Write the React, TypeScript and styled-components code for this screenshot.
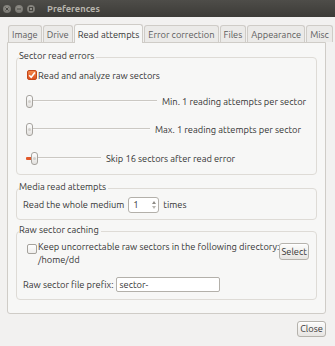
import styled, { createGlobalStyle } from 'styled-components';

const GlobalStyle = createGlobalStyle`
  html, body {
    margin: 0;
    padding: 0;
    background: #f2f1f0;
  }
  body {
    font-family: Ubuntu, "Liberation Sans", Arial, sans-serif;
    font-size: 9.3px;
    color: #353535;
  }
  * {
    box-sizing: border-box;
  }
`;

const Window = styled.div`
  width: 335px;
  height: 346px;
  background: #f2f1f0;
  display: flex;
  flex-direction: column;
  overflow: hidden;
`;

const TitleBar = styled.div`
  height: 17px;
  flex: none;
  display: flex;
  align-items: center;
  padding-left: 3px;
  background: linear-gradient(#4e4d49, #3c3b37);
`;

const WinButtons = styled.div`
  display: flex;
  gap: 4px;
`;

const WinButton = styled.span`
  width: 8px;
  height: 8px;
  border-radius: 50%;
  background: radial-gradient(circle at 50% 40%, #94928c, #6e6d68);
  display: flex;
  align-items: center;
  justify-content: center;
`;

const Title = styled.span`
  margin-left: 12px;
  font-weight: bold;
  color: #b8b5ad;
  font-size: 9.3px;
`;

const Body = styled.div`
  padding: 7px 9px 0 7px;
  display: flex;
  flex-direction: column;
`;

const Tabs = styled.div`
  display: flex;
  align-items: flex-end;
  gap: 1px;
  padding-left: 1px;
  position: relative;
  z-index: 1;
`;

const Tab = styled.div<{ $active?: boolean }>`
  height: ${(p) => (p.$active ? 19 : 17)}px;
  margin-bottom: ${(p) => (p.$active ? -1 : 0)}px;
  padding: 0 3px;
  display: flex;
  align-items: center;
  border: 1px solid #cfccc7;
  border-bottom: none;
  border-radius: 3px 3px 0 0;
  background: ${(p) => (p.$active ? '#f7f7f6' : '#ebeae8')};
  color: ${(p) => (p.$active ? '#353535' : '#5c5c5c')};
  white-space: nowrap;
`;

const Panel = styled.div`
  border: 1px solid #cfccc7;
  border-radius: 0 0 3px 3px;
  background: #f7f7f6;
  padding: 7px 8px 13px 8px;
`;

const Frame = styled.fieldset<{ $mt?: number }>`
  margin: ${(p) => p.$mt ?? 0}px 0 0 0;
  padding: 0;
  border: 1px solid #dedbd6;
  border-radius: 4px;
  min-width: 0;
`;

const Legend = styled.legend`
  padding: 0 2px 3px 0;
  margin-left: 2px;
  line-height: 12px;
`;

const FrameBody = styled.div<{ $pad: string }>`
  padding: ${(p) => p.$pad};
  display: flex;
  flex-direction: column;
`;

const CheckRow = styled.label`
  display: flex;
  align-items: center;
  height: 16px;
  gap: 1px;
`;

const Box = styled.span<{ $checked?: boolean }>`
  width: 10px;
  height: 10px;
  flex: none;
  border-radius: 2px;
  border: 1px solid ${(p) => (p.$checked ? '#c4471a' : '#a5a29c')};
  background: ${(p) =>
    p.$checked ? 'linear-gradient(#f2874a, #dd5221)' : 'linear-gradient(#ffffff, #efeeec)'};
  display: flex;
  align-items: center;
  justify-content: center;
`;

const SliderRow = styled.div<{ $first?: boolean }>`
  display: flex;
  align-items: center;
  height: 28.5px;
  margin-top: ${(p) => (p.$first ? 4 : 0)}px;
`;

const Slider = styled.div<{ $w: number }>`
  position: relative;
  width: ${(p) => p.$w}px;
  height: 13px;
  flex: none;
  margin-left: -1px;
`;

const Trough = styled.div`
  position: absolute;
  left: 2px;
  right: 0;
  top: 5px;
  height: 2px;
  background: #cbc8c3;
  border-bottom: 1px solid #fbfbfb;
`;

const Fill = styled.div<{ $w: number }>`
  position: absolute;
  left: 0;
  top: 5px;
  width: ${(p) => p.$w}px;
  height: 3px;
  border-radius: 1px;
  background: #e2592a;
`;

const Knob = styled.div<{ $x: number }>`
  position: absolute;
  top: 0;
  left: ${(p) => p.$x}px;
  width: 7px;
  height: 13px;
  border: 1px solid #a6a39e;
  border-radius: 3px;
  background: linear-gradient(#fefefe, #e3e1de);
  display: flex;
  align-items: center;
  justify-content: center;

  &::after {
    content: '';
    width: 3px;
    height: 3px;
    border-radius: 50%;
    background: #d3d0cb;
  }
`;

const SliderLabel = styled.span`
  margin-left: 5px;
  white-space: nowrap;
`;

const Row = styled.div<{ $mt?: number; $ml?: number }>`
  display: flex;
  align-items: center;
  height: 16px;
  margin-top: ${(p) => p.$mt ?? 0}px;
  margin-left: ${(p) => p.$ml ?? 0}px;
`;

const Spin = styled.div`
  width: 31px;
  height: 16px;
  margin: 0 4px;
  border: 1px solid #b3b0aa;
  border-radius: 3px;
  background: #fff;
  display: flex;
  align-items: center;
  justify-content: space-between;
  padding: 0 2px 0 4px;
`;

const Arrows = styled.span`
  display: flex;
  flex-direction: column;
  gap: 2px;
`;

const Entry = styled.div`
  width: 104px;
  height: 15px;
  margin-left: 2px;
  border: 1px solid #b3b0aa;
  border-radius: 2px;
  background: #fff;
  display: flex;
  align-items: center;
  padding-left: 3px;
`;

const DirRow = styled.div`
  display: flex;
  align-items: flex-start;
`;

const DirCheck = styled.div`
  padding-top: 4px;
  margin-right: 1px;
`;

const DirText = styled.div`
  line-height: 13px;
  white-space: nowrap;
`;

const Button = styled.button<{ $w: number; $h: number }>`
  width: ${(p) => p.$w}px;
  height: ${(p) => p.$h}px;
  padding: 0;
  font: inherit;
  color: #353535;
  border: 1px solid #b5b2ac;
  border-radius: 3px;
  background: linear-gradient(#fcfcfb, #e7e5e2);
  box-shadow: inset 0 1px 0 #fff;
`;

const SelectButton = styled(Button)`
  margin-left: auto;
  margin-top: 3px;
`;

const Footer = styled.div`
  display: flex;
  justify-content: flex-end;
  padding: 7px 9px 0 0;
`;

const tabs = ['Image', 'Drive', 'Read attempts', 'Error correction', 'Files', 'Appearance', 'Misc'];

const sliders = [
  { w: 131, knob: 0, fill: 0, label: 'Min. 1 reading attempts per sector' },
  { w: 124, knob: 0, fill: 0, label: 'Max. 1 reading attempts per sector' },
  { w: 75, knob: 5, fill: 6, label: 'Skip 16 sectors after read error' },
];

function Check({ checked }: { checked?: boolean }) {
  return (
    <Box $checked={checked}>
      {checked && (
        <svg width="8" height="8" viewBox="0 0 8 8">
          <path d="M1.2 4.2 L3.2 6.2 L6.9 1.6" fill="none" stroke="#fff" strokeWidth="1.6" />
        </svg>
      )}
    </Box>
  );
}

export default function App() {
  return (
    <Window>
      <GlobalStyle />
      <TitleBar>
        <WinButtons>
          <WinButton>
            <svg width="4" height="4" viewBox="0 0 4 4">
              <path d="M0.5 0.5 L3.5 3.5 M3.5 0.5 L0.5 3.5" stroke="#45443f" strokeWidth="1" />
            </svg>
          </WinButton>
          <WinButton>
            <svg width="4" height="4" viewBox="0 0 4 4">
              <path d="M0 2 H4" stroke="#45443f" strokeWidth="1" />
            </svg>
          </WinButton>
          <WinButton>
            <svg width="4" height="4" viewBox="0 0 4 4">
              <rect x="0.5" y="0.5" width="3" height="3" fill="none" stroke="#45443f" strokeWidth="1" />
            </svg>
          </WinButton>
        </WinButtons>
        <Title>Preferences</Title>
      </TitleBar>

      <Body>
        <Tabs>
          {tabs.map((t) => (
            <Tab key={t} $active={t === 'Read attempts'}>
              {t}
            </Tab>
          ))}
        </Tabs>
        <Panel>
          <Frame>
            <Legend>Sector read errors</Legend>
            <FrameBody $pad="2px 0 1px 10px">
              <CheckRow>
                <Check checked />
                <span>Read and analyze raw sectors</span>
              </CheckRow>
              {sliders.map((s, i) => (
                <SliderRow key={s.label} $first={i === 0}>
                  <Slider $w={s.w}>
                    <Trough />
                    {s.fill > 0 && <Fill $w={s.fill} />}
                    <Knob $x={s.knob} />
                  </Slider>
                  <SliderLabel>{s.label}</SliderLabel>
                </SliderRow>
              ))}
            </FrameBody>
          </Frame>

          <Frame $mt={6}>
            <Legend>Media read attempts</Legend>
            <FrameBody $pad="1px 0 6px 6px">
              <Row>
                <span>Read the whole medium</span>
                <Spin>
                  <span>1</span>
                  <Arrows>
                    <svg width="4" height="3" viewBox="0 0 4 3">
                      <path d="M0 3 L2 0 L4 3 Z" fill="#8d8a85" />
                    </svg>
                    <svg width="4" height="3" viewBox="0 0 4 3">
                      <path d="M0 0 L2 3 L4 0 Z" fill="#b9b6b1" />
                    </svg>
                  </Arrows>
                </Spin>
                <span>times</span>
              </Row>
            </FrameBody>
          </Frame>

          <Frame $mt={4}>
            <Legend>Raw sector caching</Legend>
            <FrameBody $pad="1px 7px 6px 10px">
              <DirRow>
                <DirCheck>
                  <Check />
                </DirCheck>
                <DirText>
                  Keep uncorrectable raw sectors in the following directory:
                  <br />
                  /home/dd
                </DirText>
                <SelectButton $w={31} $h={17}>
                  Select
                </SelectButton>
              </DirRow>
              <Row $mt={11} $ml={-4}>
                <span>Raw sector file prefix:</span>
                <Entry>sector-</Entry>
              </Row>
            </FrameBody>
          </Frame>
        </Panel>
      </Body>

      <Footer>
        <Button $w={29} $h={16}>
          Close
        </Button>
      </Footer>
    </Window>
  );
}
